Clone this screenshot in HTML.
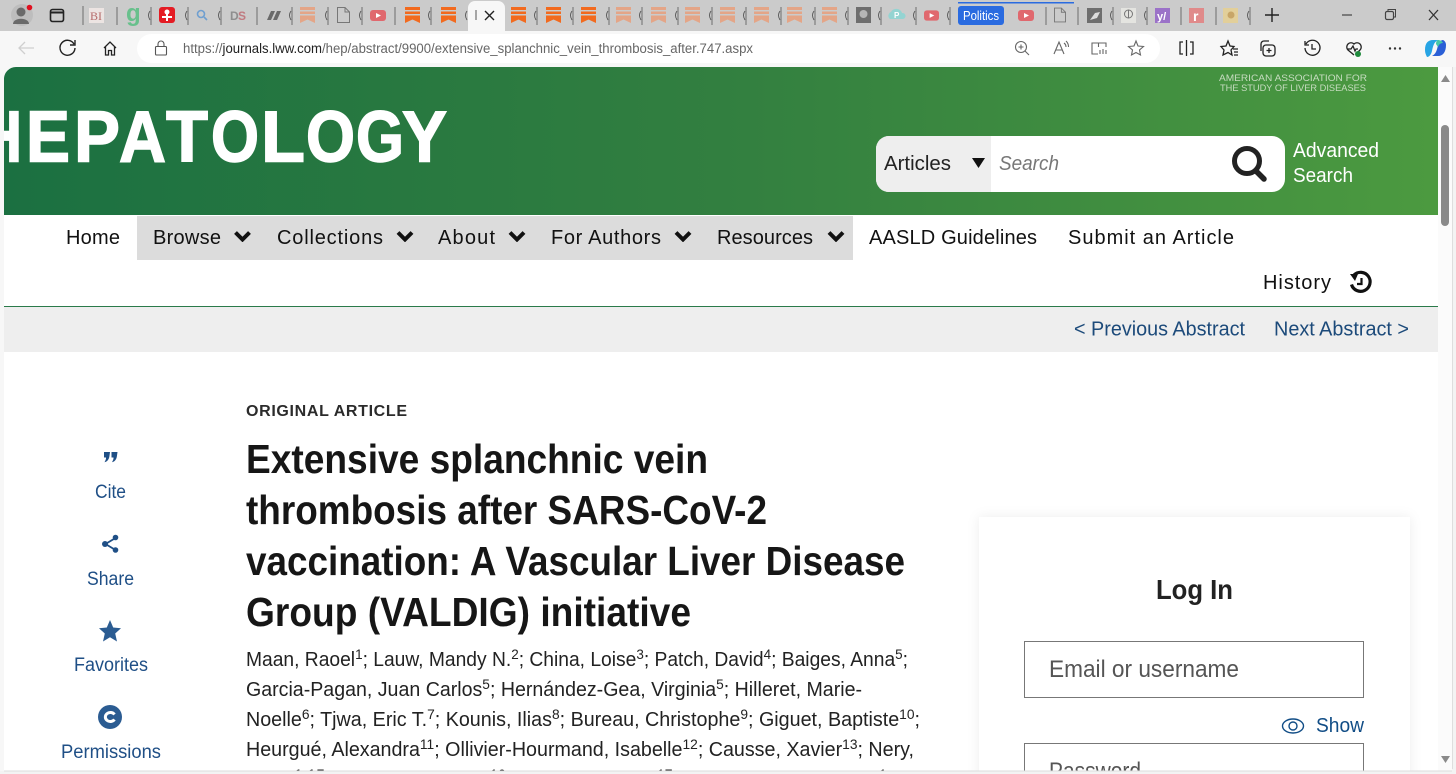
<!DOCTYPE html>
<html lang="en"><head><meta charset="utf-8"><title>Extensive splanchnic vein thrombosis</title>
<style>
html,body{margin:0;padding:0;width:1456px;height:774px;overflow:hidden;background:#fff}
svg{display:block}
text{font-family:"Liberation Sans",sans-serif}
.nav{font-size:20px;fill:#111}
.lnk{font-size:20px;fill:#1c4a7a}
.side{font-size:19px;fill:#1f4f86}
.t{font-size:41px;font-weight:700;fill:#161616}
.a{font-size:20px;fill:#222}
.h{font-size:72px;font-weight:700;fill:#fff;stroke:#fff;stroke-width:1.500px}
.sep{stroke:#6d6d6d;stroke-width:1}
.ic{fill:none;stroke:#333;stroke-width:1.4}
</style></head><body>
<svg width="1456" height="774" viewBox="0 0 1456 774" xmlns="http://www.w3.org/2000/svg">
<defs>
<linearGradient id="g" x1="0" y1="0" x2="1" y2="0"><stop offset="0" stop-color="#1b7041"/><stop offset=".5" stop-color="#327f40"/><stop offset="1" stop-color="#4c9a40"/></linearGradient>
<clipPath id="pg"><path d="M4 80a12 12 0 0 1 12-13H1438V771H4Z"/></clipPath>
<symbol id="bm" viewBox="0 0 15 16"><path d="M0 0H15V3H0ZM0 4.500H15V7H0ZM0 8.500H15V16L7.500 12.500 0 16Z"/></symbol>
<symbol id="yt" viewBox="0 0 16 11"><rect width="16" height="11" rx="3" fill="#e0686e"/><path d="M6 3L11 5.500 6 8Z" fill="#fff"/></symbol>
<symbol id="doc" viewBox="0 0 13 16"><path d="M1 .5H8L12.500 5V15.500H.5V.5ZM8 .5V5H12.500" fill="none" stroke="#777"/></symbol>
<symbol id="ch" viewBox="0 0 18 12"><path d="M2 2.500L9 9.500 16 2.500" fill="none" stroke="#111" stroke-width="4"/></symbol>
</defs>

<!-- browser chrome -->
<rect width="1456" height="774" fill="#f7f7f7"/>
<rect width="1456" height="31" fill="#cbcbcb"/>
<path d="M468 31V8a7 7 0 0 1 7-7H498a7 7 0 0 1 7 7V31Z" fill="#f7f7f7"/>
<circle cx="22" cy="15" r="11" fill="#bdbdbd"/><circle cx="21" cy="12" r="4.500" fill="#6a6a6a"/><path d="M13 24c0-7 16-7 16 0Z" fill="#6a6a6a"/><circle cx="29.500" cy="7.500" r="2.800" fill="#e01020"/>
<rect x="50.500" y="9.500" width="13" height="12" rx="2" class="ic" style="stroke:#222;stroke-width:1.600"/><path d="M51 12.500H63" stroke="#222" stroke-width="2"/>
<g class="sep">
<path d="M83 6V25M117 7V25M151 7V25M188 7V25M221 7V25M257 7V25M292 7V25M328 7V25M362 7V25M395 7V25M431 7V25M537 7V25M573 7V25M609 7V25M642 7V25M678 7V25M712 7V25M746 7V25M781 7V25M815 7V25M848 7V25M881 7V25M916 7V25M950 7V25M1046 7V25M1078 7V25M1113 7V25M1147 7V25M1181 7V25M1216 7V25M1250 7V25"/>
</g>
<path d="M150 11q-3 4 0 9M187 11q-3 4 0 9M220 11q-3 4 0 9M291 11q-3 4 0 9M327 11q-3 4 0 9M361 11q-3 4 0 9M430 11q-3 4 0 9M467 11q-3 4 0 9M536 11q-3 4 0 9M572 11q-3 4 0 9M608 11q-3 4 0 9M641 11q-3 4 0 9M677 11q-3 4 0 9M711 11q-3 4 0 9M745 11q-3 4 0 9M780 11q-3 4 0 9M814 11q-3 4 0 9M847 11q-3 4 0 9M880 11q-3 4 0 9M915 11q-3 4 0 9M949 11q-3 4 0 9M1112 11q-3 4 0 9M1146 11q-3 4 0 9M1249 11q-3 4 0 9" fill="none" stroke="#555" stroke-width=".9"/>
<rect x="89" y="8" width="15" height="15" fill="#ece4e2"/><text x="90" y="20" font-size="12" fill="#b56a6a" style="font-family:'Liberation Serif',serif">BI</text>
<text x="126" y="21" font-size="24" font-weight="700" fill="#68c08c">g</text>
<rect x="159" y="7" width="16" height="16" rx="3" fill="#e41c24"/><circle cx="167" cy="12" r="2.500" fill="#fff"/><rect x="162" y="16" width="10" height="2" fill="#fff"/><rect x="166" y="13" width="2" height="8" fill="#fff"/>
<circle cx="201" cy="14" r="3.500" fill="none" stroke="#6f9fd0" stroke-width="1.600"/><path d="M204 17L207 20" stroke="#6f9fd0" stroke-width="1.600"/>
<text x="230" y="20" font-size="12" font-weight="700" fill="#8e8e8e">D</text><text x="238" y="20" font-size="12" font-weight="700" fill="#c07a80">S</text>
<path d="M267 20L271 11H275L271 20ZM273 20L277 11H281L277 20Z" fill="#6a6a6a"/>
<use href="#bm" x="300" y="7" width="15" height="16" fill="#e4a587"/>
<use href="#doc" x="337" y="7" width="13" height="16"/>
<use href="#yt" x="370" y="10" width="16" height="11"/>
<use href="#bm" x="405" y="7" width="15" height="16" fill="#f26a1e"/>
<use href="#bm" x="441" y="7" width="15" height="16" fill="#f26a1e"/>
<path d="M476 10V20" stroke="#555"/><path d="M485 11L494 20M494 11L485 20" stroke="#222" stroke-width="1.400"/>
<use href="#bm" x="511" y="7" width="15" height="16" fill="#f26a1e"/>
<use href="#bm" x="546" y="7" width="15" height="16" fill="#f26a1e"/>
<use href="#bm" x="581" y="7" width="15" height="16" fill="#f26a1e"/>
<use href="#bm" x="616" y="7" width="15" height="16" fill="#e4a587"/>
<use href="#bm" x="651" y="7" width="15" height="16" fill="#e4a587"/>
<use href="#bm" x="685" y="7" width="15" height="16" fill="#e4a587"/>
<use href="#bm" x="720" y="7" width="15" height="16" fill="#e4a587"/>
<use href="#bm" x="754" y="7" width="15" height="16" fill="#e4a587"/>
<use href="#bm" x="787" y="7" width="15" height="16" fill="#e4a587"/>
<use href="#bm" x="822" y="7" width="15" height="16" fill="#e4a587"/>
<rect x="856" y="7" width="15" height="16" fill="#6e6e6e"/><circle cx="863.500" cy="14" r="4" fill="#b5b5b5"/>
<path d="M890 19a4 4 0 0 1 1-7 6 6 0 0 1 11 1 3 3 0 0 1 1 6Z" fill="#94d4d2"/><text x="894" y="18" font-size="8" fill="#fff" font-weight="700">P</text>
<use href="#yt" x="924" y="10" width="15" height="11"/>
<rect x="958" y="2" width="116" height="1.500" fill="#2a6be0"/>
<rect x="958" y="6" width="46" height="19" rx="3" fill="#2a6be0"/><text x="963" y="20" font-size="12.500" fill="#fff" textLength="36" lengthAdjust="spacingAndGlyphs">Politics</text>
<use href="#yt" x="1018" y="10" width="16" height="11"/>
<use href="#doc" x="1054" y="7" width="12" height="16"/>
<rect x="1087" y="8" width="15" height="15" fill="#6e6e6e"/><path d="M1090 20L1095 13 1100 12 1097 18Z" fill="#ddd"/>
<rect x="1121" y="8" width="15" height="15" fill="#e4e4e0"/><circle cx="1128.500" cy="14" r="4" fill="none" stroke="#777"/><path d="M1128.500 10V18" stroke="#777"/>
<rect x="1155" y="8" width="15" height="15" fill="#9b72c8"/><text x="1157" y="20" font-size="11" fill="#fff" font-weight="700">y/</text>
<rect x="1189" y="8" width="15" height="15" fill="#e08a8a"/><text x="1193" y="21" font-size="14" fill="#fff" font-weight="700">r</text>
<rect x="1223" y="8" width="15" height="15" fill="#e2cf9a"/><circle cx="1231" cy="15" r="3.500" fill="#c8a668"/>
<path d="M1272 8V22M1265 15H1279" stroke="#222" stroke-width="1.400"/>
<path d="M1342 15H1352" stroke="#444" stroke-width="1.200"/>
<rect x="1385.500" y="11.500" width="8" height="8" rx="1.500" fill="none" stroke="#444" stroke-width="1.200"/><path d="M1388 11V9.500H1395.500V17H1394" fill="none" stroke="#444"/>
<path d="M1429 10L1438 20M1438 10L1429 20" stroke="#333" stroke-width="1.300"/>

<rect x="137" y="34" width="1023" height="29" rx="14.500" fill="#fff"/>
<path d="M34 48H19M25 42L19 48 25 54" fill="none" stroke="#cfcfcf" stroke-width="1.300"/>
<path d="M74 44a7.500 7.500 0 1 0 1 4M75 40V45H70" fill="none" stroke="#222" stroke-width="1.400"/>
<path d="M104 48L110 42 116 48M105.500 47V55H108.500V50.500H111.500V55H114.500V47" fill="none" stroke="#222" stroke-width="1.300"/>
<rect x="155.500" y="46.500" width="11" height="8.500" rx="1" fill="none" stroke="#555" stroke-width="1.100"/><path d="M158 46V44a3 3 0 0 1 6 0V46" fill="none" stroke="#555" stroke-width="1.100"/>
<text x="183" y="53" font-size="13.500" fill="#666" textLength="570" lengthAdjust="spacingAndGlyphs">https://<tspan fill="#222">journals.lww.com</tspan>/hep/abstract/9900/extensive_splanchnic_vein_thrombosis_after.747.aspx</text>
<g fill="none" stroke="#666" stroke-width="1.100">
<circle cx="1021" cy="47" r="5.500"/><path d="M1025 51L1029 55M1018.500 47H1023.500M1021 44.500V49.500"/>
<path d="M1054 54L1059 42 1064 54M1056 50H1062M1064 43a5 5 0 0 1 2 4M1066 41a8 8 0 0 1 2.500 6"/>
<path d="M1098 54H1092V43H1098.500V47M1098.500 43H1106V47"/><path d="M1100 50V54M1103 49V54M1106 50V54"/>
<path d="M1136 41L1138 46 1143.500 46.500 1139.500 50 1140.500 55 1136 52.500 1131.500 55 1132.500 50 1128.500 46.500 1134 46Z"/>
</g>
<g fill="none" stroke="#222" stroke-width="1.300">
<path d="M1183 42H1180V54H1183M1190 42H1193V54H1190M1186.500 40V56"/>
<path d="M1228 41L1230 46 1234 46.500 1231 50 1232 55 1228 52.500 1223 55 1224 50 1221 46.500 1226 46ZM1233 49H1238M1234 52H1238M1234 55H1238"/>
<rect x="1263" y="45" width="12" height="11" rx="3"/><path d="M1269 48V53M1266.500 50.500H1271.500M1261 51V44a3 3 0 0 1 3-3H1269"/>
<path d="M1306 44a7.500 7.500 0 1 1-1 4M1305 41V45H1309M1312 44V49H1316"/>
<path d="M1354 55L1348 50a4 4 0 0 1 6-6 4 4 0 0 1 6 6L1357 53M1347 49H1351L1353 46 1355 51 1356 49H1358"/>
</g>
<circle cx="1358" cy="54" r="3" fill="#1e8a3c"/>
<g fill="#333"><circle cx="1390" cy="48.500" r="1.200"/><circle cx="1395" cy="48.500" r="1.200"/><circle cx="1400" cy="48.500" r="1.200"/></g>
<path d="M1425 50c0-7 3-10 8-10h5c-4 2-5 6-6 11-1 4-3 6-5 6-1-2-2-4-2-7Z" fill="#27a4e4"/><path d="M1446 45c0 7-3 11-8 11h-6c4-2 5-6 6-11 1-3 3-5 5-5 2 1 3 3 3 5Z" fill="#2a5fd6"/><path d="M1438 40c2 0 4 1 5 3-2 0-4 1-5 4l-2-3c0-2 1-4 2-4Z" fill="#45c8a8"/>

<!-- page -->
<g clip-path="url(#pg)">
<rect x="4" y="67" width="1434" height="704" fill="#fff"/>
<rect x="4" y="67" width="1434" height="148" fill="url(#g)"/>
<text class="h" x="-20" y="161.300" textLength="42" lengthAdjust="spacingAndGlyphs">H</text>
<text class="h" x="26" y="161.300" textLength="44" lengthAdjust="spacingAndGlyphs">E</text>
<text class="h" x="74" y="161.300" textLength="46" lengthAdjust="spacingAndGlyphs">P</text>
<text class="h" x="119" y="161.300" textLength="47" lengthAdjust="spacingAndGlyphs">A</text>
<text class="h" x="166" y="161.300" textLength="42" lengthAdjust="spacingAndGlyphs">T</text>
<text class="h" x="211" y="161.300" textLength="48" lengthAdjust="spacingAndGlyphs">O</text>
<text class="h" x="261" y="161.300" textLength="44" lengthAdjust="spacingAndGlyphs">L</text>
<text class="h" x="306" y="161.300" textLength="49" lengthAdjust="spacingAndGlyphs">O</text>
<text class="h" x="356" y="161.300" textLength="48" lengthAdjust="spacingAndGlyphs">G</text>
<text class="h" x="402" y="161.300" textLength="45" lengthAdjust="spacingAndGlyphs">Y</text>
<g font-size="9.500" fill="#c7dcc0">
<text x="1219" y="81" textLength="148" lengthAdjust="spacingAndGlyphs">AMERICAN ASSOCIATION FOR</text>
<text x="1220" y="91" textLength="146" lengthAdjust="spacingAndGlyphs">THE STUDY OF LIVER DISEASES</text>
</g>
<rect x="876" y="136" width="409" height="56" rx="13" fill="#fff"/>
<path d="M991 136H889a13 13 0 0 0-13 13V179a13 13 0 0 0 13 13H991Z" fill="#eeeeee"/>
<text x="884" y="170" font-size="20.500" fill="#222" textLength="67" lengthAdjust="spacingAndGlyphs">Articles</text>
<path d="M972 158H985L978.500 168Z" fill="#111"/>
<text x="999" y="170" font-size="20.500" font-style="italic" fill="#777" textLength="60" lengthAdjust="spacingAndGlyphs">Search</text>
<circle cx="1247" cy="161" r="12.500" fill="none" stroke="#222" stroke-width="5"/><path d="M1256 171L1264 179" stroke="#222" stroke-width="5.500" stroke-linecap="round"/>
<g font-size="20.500" fill="#fff"><text x="1293" y="157" textLength="86" lengthAdjust="spacingAndGlyphs">Advanced</text><text x="1293" y="182" textLength="60" lengthAdjust="spacingAndGlyphs">Search</text></g>

<rect x="137" y="216" width="716" height="44" fill="#dcdcdc"/>
<text class="nav" x="66" y="244" textLength="54">Home</text>
<text class="nav" x="153" y="244" textLength="68">Browse</text><use href="#ch" x="233.500" y="230" width="18" height="12"/>
<text class="nav" x="277" y="244" textLength="106">Collections</text><use href="#ch" x="396" y="230" width="18" height="12"/>
<text class="nav" x="438" y="244" textLength="57">About</text><use href="#ch" x="508" y="230" width="18" height="12"/>
<text class="nav" x="551" y="244" textLength="110">For Authors</text><use href="#ch" x="674" y="230" width="18" height="12"/>
<text class="nav" x="717" y="244" textLength="96">Resources</text><use href="#ch" x="827" y="230" width="18" height="12"/>
<text class="nav" x="869" y="244" textLength="168">AASLD Guidelines</text>
<text class="nav" x="1068" y="244" textLength="166">Submit an Article</text>
<text class="nav" x="1263" y="289" textLength="68">History</text>
<path d="M1354 275a9.500 9.500 0 1 1-2.500 9.500" fill="none" stroke="#111" stroke-width="3.200"/><path d="M1350 274H1358L1355 281Z" fill="#111"/><path d="M1361.500 278V284H1357" fill="none" stroke="#111" stroke-width="2.200"/>
<rect x="4" y="306" width="1434" height="1" fill="#2a7a4a"/>
<rect x="4" y="307" width="1434" height="45" fill="#eeeeee"/>
<text class="lnk" x="1074" y="335.500" textLength="171" lengthAdjust="spacingAndGlyphs">&lt; Previous Abstract</text>
<text class="lnk" x="1274" y="335.500" textLength="135" lengthAdjust="spacingAndGlyphs">Next Abstract &gt;</text>

<text x="246" y="416" font-size="16" font-weight="700" fill="#2b2b2b" textLength="161">ORIGINAL ARTICLE</text>
<text class="t" x="246" y="473" textLength="462" lengthAdjust="spacingAndGlyphs">Extensive splanchnic vein</text>
<text class="t" x="246" y="524" textLength="521" lengthAdjust="spacingAndGlyphs">thrombosis after SARS-CoV-2</text>
<text class="t" x="246" y="575" textLength="659" lengthAdjust="spacingAndGlyphs">vaccination: A Vascular Liver Disease</text>
<text class="t" x="246" y="626" textLength="445" lengthAdjust="spacingAndGlyphs">Group (VALDIG) initiative</text>
<text class="a" x="246" y="666" textLength="662" lengthAdjust="spacingAndGlyphs">Maan, Raoel<tspan dy="-7" font-size="14">1</tspan><tspan dy="7">; Lauw, Mandy N.</tspan><tspan dy="-7" font-size="14">2</tspan><tspan dy="7">; China, Loise</tspan><tspan dy="-7" font-size="14">3</tspan><tspan dy="7">; Patch, David</tspan><tspan dy="-7" font-size="14">4</tspan><tspan dy="7">; Baiges, Anna</tspan><tspan dy="-7" font-size="14">5</tspan><tspan dy="7">;</tspan></text>
<text class="a" x="246" y="696" textLength="616" lengthAdjust="spacingAndGlyphs">Garcia-Pagan, Juan Carlos<tspan dy="-7" font-size="14">5</tspan><tspan dy="7">; Hernández-Gea, Virginia</tspan><tspan dy="-7" font-size="14">5</tspan><tspan dy="7">; Hilleret, Marie-</tspan></text>
<text class="a" x="246" y="726" textLength="674" lengthAdjust="spacingAndGlyphs">Noelle<tspan dy="-7" font-size="14">6</tspan><tspan dy="7">; Tjwa, Eric T.</tspan><tspan dy="-7" font-size="14">7</tspan><tspan dy="7">; Kounis, Ilias</tspan><tspan dy="-7" font-size="14">8</tspan><tspan dy="7">; Bureau, Christophe</tspan><tspan dy="-7" font-size="14">9</tspan><tspan dy="7">; Giguet, Baptiste</tspan><tspan dy="-7" font-size="14">10</tspan><tspan dy="7">;</tspan></text>
<text class="a" x="246" y="756" textLength="668" lengthAdjust="spacingAndGlyphs">Heurgué, Alexandra<tspan dy="-7" font-size="14">11</tspan><tspan dy="7">; Ollivier-Hourmand, Isabelle</tspan><tspan dy="-7" font-size="14">12</tspan><tspan dy="7">; Causse, Xavier</tspan><tspan dy="-7" font-size="14">13</tspan><tspan dy="7">; Nery,</tspan></text>
<g font-size="14" fill="#222"><text x="294" y="779" textLength="31" lengthAdjust="spacingAndGlyphs">1,15</text><text x="490" y="779">16</text><text x="657" y="779">17</text><text x="879" y="779">1</text></g>

<path d="M104 452h6l-.600 4.200c-.4 3-2 5.300-4.900 6 1.200-2 1.700-3.500 1.500-4.700H104ZM111.500 452h6l-.600 4.200c-.4 3-2 5.300-4.900 6 1.200-2 1.700-3.500 1.500-4.700h-2Z" fill="#1f4f86"/>
<text class="side" x="95" y="498" textLength="31" lengthAdjust="spacingAndGlyphs">Cite</text>
<path d="M115.500 538L105.500 544 115.500 550" fill="none" stroke="#1f4f86" stroke-width="1.800"/><circle cx="115.500" cy="537.500" r="2.800" fill="#1f4f86"/><circle cx="105" cy="544" r="3" fill="#1f4f86"/><circle cx="115.500" cy="550" r="2.800" fill="#1f4f86"/>
<text class="side" x="87" y="585" textLength="47" lengthAdjust="spacingAndGlyphs">Share</text>
<path d="M110 620L113.200 627.500 121 628.200 115.200 633.500 117 641.500 110 637.300 103 641.500 104.800 633.500 99 628.200 106.800 627.500Z" fill="#2b5c92"/>
<text class="side" x="74" y="671" textLength="74" lengthAdjust="spacingAndGlyphs">Favorites</text>
<circle cx="110" cy="717" r="12" fill="#2b5c92"/><path d="M114.500 714.500a5 4.500 0 1 0 0 5" fill="none" stroke="#fff" stroke-width="3"/>
<text class="side" x="61" y="758" textLength="100" lengthAdjust="spacingAndGlyphs">Permissions</text>

<rect x="979" y="517" width="431" height="280" fill="#fff" style="filter:drop-shadow(0 0 6px rgba(0,0,0,.07))"/>
<text x="1156" y="599" font-size="28" font-weight="700" fill="#222" textLength="77" lengthAdjust="spacingAndGlyphs">Log In</text>
<rect x="1024.500" y="641.500" width="339" height="56" fill="#fff" stroke="#777"/>
<text x="1049" y="677" font-size="24" fill="#555" textLength="190" lengthAdjust="spacingAndGlyphs">Email or username</text>
<ellipse cx="1293" cy="726" rx="10.500" ry="7" fill="none" stroke="#114d86" stroke-width="1.400"/><circle cx="1293" cy="726" r="4" fill="none" stroke="#114d86" stroke-width="1.400"/>
<text x="1316" y="732" font-size="20" fill="#114d86" textLength="48" lengthAdjust="spacingAndGlyphs">Show</text>
<rect x="1024.500" y="743.500" width="339" height="56" fill="#fff" stroke="#777"/>
<text x="1049" y="779" font-size="24" fill="#555" textLength="92" lengthAdjust="spacingAndGlyphs">Password</text>
</g>

<!-- scrollbar + window edge -->
<rect x="1438" y="67" width="14" height="704" fill="#fbfbfb"/>
<rect x="1441" y="125" width="8" height="101" rx="4" fill="#8a8a8a"/>
<path d="M1441 82L1445.500 75 1450 82Z" fill="#8a8a8a"/><path d="M1441 756L1450 756 1445.500 763Z" fill="#8a8a8a"/>
<rect x="1452" y="67" width="4" height="707" fill="#f3f3f3"/><rect x="1452" y="67" width="1" height="702" fill="#dedede"/>
<rect x="0" y="771" width="1452" height="3" fill="#f3f3f3"/><rect x="4" y="770.500" width="1448" height="1" fill="#dcdcdc"/>
</svg>
</body></html>
